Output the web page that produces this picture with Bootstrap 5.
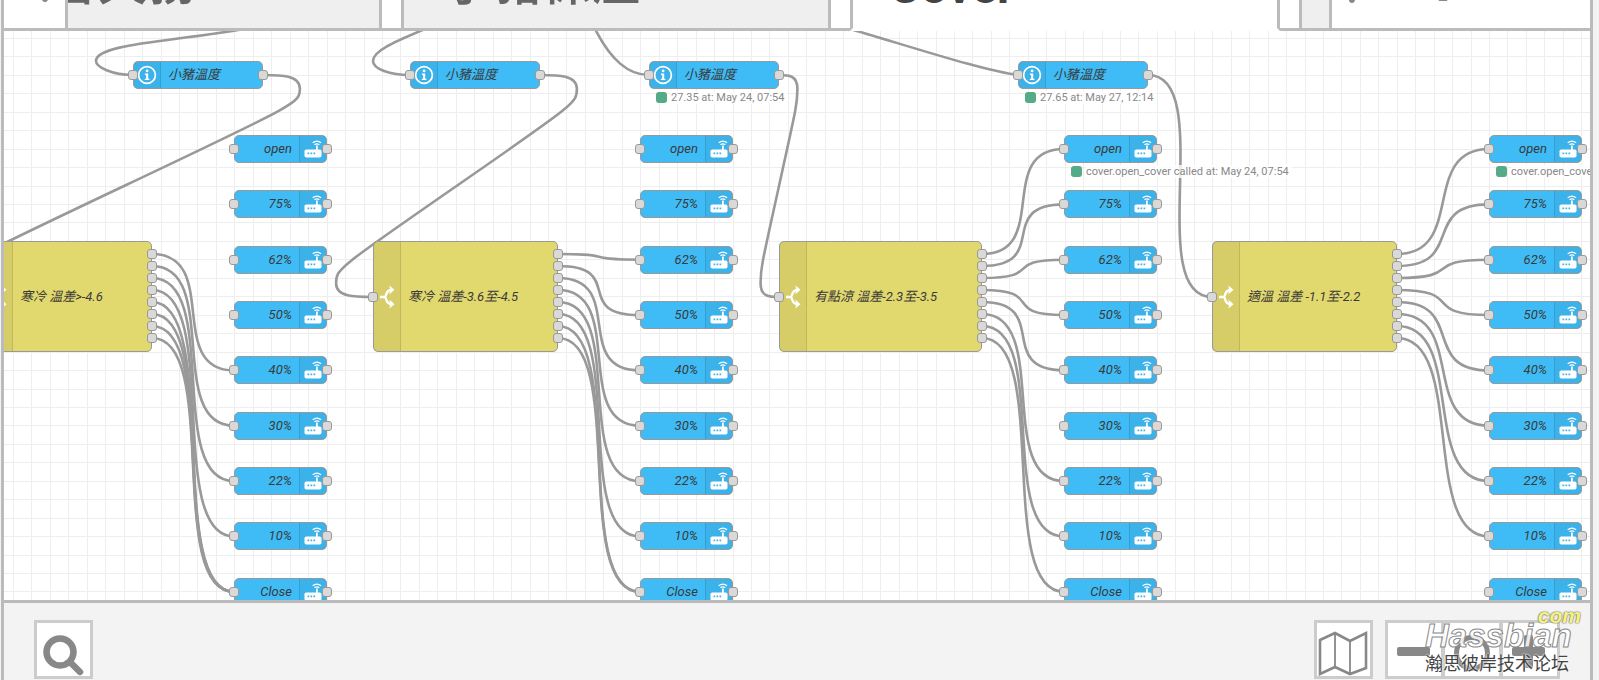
<!DOCTYPE html>
<html lang="zh-Hant">
<head>
<meta charset="utf-8">
<meta name="viewport" content="width=device-width, initial-scale=1">
<title>Cover</title>
<link href="https://cdn.jsdelivr.net/npm/bootstrap@5.3.0/dist/css/bootstrap.min.css" rel="stylesheet">
<style>
  body { font-family: Roboto, "Noto Sans CJK TC", sans-serif; background: #f3f3f3; }
  .workspace { margin: 0 6px 0 1px; border: solid #bbb; border-width: 0 3px; }

  .tabstrip { height: 31px; background: #fff; }
  .tabstrip > * { height: 71px; border-bottom: 3px solid #bbb; }
  .tab { width: 430px; padding: 0 40px; border: solid #bbb; border-width: 0 3px 3px; background: #efefef;
         color: #666; font-size: 49px; line-height: 48px; text-decoration: none; font-weight: 500; white-space: nowrap; }
  .tab-first { margin-left: -116px; padding-left: 94px; }
  .tab-current { background: #fff; color: #444; font-size: 48px; line-height: 53px; font-weight: 700; border-bottom-color: #fff; padding-left: 36px; }
  .tab-next { min-width: 0; padding: 0; border-right: 0; }
  .tab-gap { width: 19px; }
  .tabstrip .scroll-left { width: 64px; border: solid #bbb; border-width: 0 3px 3px 0; background: #fff; z-index: 2; padding: 12px 0 0 11px; }
  .tab-tools { width: 261px; border-left: 3px solid #bbb; background: #fff; z-index: 2; padding-top: 14px; }
  .tab-tools button { border: 0; background: none; }

  .flow { background: #fff; }
  .flow > svg { width: 100%; height: 100%; }
  .grid-line { stroke: #eee; stroke-width: 1; shape-rendering: crispEdges; }
  .wire { fill: none; stroke: #999; stroke-width: 2.6; }

  .node { border: 1px solid #999; border-radius: 5px; font-size: 13px; line-height: 26px; font-style: italic; color: #3a3a3a; }
  .node svg { display: block; }
  .node-info { width: 130px; height: 28px; background: #3fbcf6; }
  .node-call { width: 93px; height: 28px; background: #3fbcf6; }
  .node-switch { height: 111px; background: #e2d96e; }
  .node-icon { width: 27px; background: rgba(0,0,0,.05); border: 0 solid rgba(0,0,0,.1); }
  .node-info .node-icon, .node-switch .node-icon { border-right-width: 1px; }
  .node-call .node-icon { border-left-width: 1px; }
  .node-label { padding: 0 7px; white-space: nowrap; }
  .port { width: 10px; height: 10px; border: 1px solid #999; border-radius: 3px; background: #d9d9d9; }
  .node-status { font-size: 11px; line-height: 13px; color: #888; white-space: nowrap; }
  .node-status b { flex: none; width: 11px; height: 11px; border-radius: 3px; background: #5a8; }
  .node-status span { background: rgba(255,255,255,.8); padding-right: 3px; }

  .footer-bar { height: 80px; border-top: 3px solid #bbb; background: #f3f3f3; padding: 17px 30px 0; }
  .tool { width: 59px; height: 59px; padding: 0; border: 3px solid #ccc; background: #fff; }
  .tool + .tool-joined { margin-left: -1px; border-left-width: 2px; }
  .tool svg { display: block; margin: auto; }

  .brand-mark { right: 24px; bottom: 6px; width: 150px; pointer-events: none; }
  .brand-com { font: italic bold 21px/12px "Liberation Sans", sans-serif; color: #f7f37a; text-shadow: 0 0 1px #777, 0 0 1px #777, 0 0 2px #888; z-index: 1; margin-right: -6px; }
  .brand-name { font: italic bold 33px/28px "Liberation Sans", sans-serif; color: rgba(255,255,255,.85); -webkit-text-stroke: 1px #888; }
  .brand-sub { font: 18px/24px "Noto Sans CJK SC", sans-serif; color: #444; text-shadow: 0 0 2px #fff, 0 0 2px #fff; white-space: nowrap; }
</style>
</head>
<body class="vh-100 overflow-hidden position-relative">
<div class="workspace h-100 d-flex flex-column">
  <nav class="tabstrip d-flex align-items-end overflow-hidden flex-shrink-0">
    <button class="scroll-left flex-shrink-0 d-flex justify-content-center align-items-start" aria-label="Scroll left">
      <svg width="18" height="32" viewBox="0 0 18 32"><path d="M14 4 L4 16 L14 27" fill="none" stroke="#888" stroke-width="6" stroke-linecap="round"/></svg>
    </button>
    <a href="#" class="tab tab-first flex-shrink-0">智天務</a>
    <span class="tab-gap flex-shrink-0"></span>
    <a href="#" class="tab flex-shrink-0">小豬保溫</a>
    <span class="tab-gap flex-shrink-0"></span>
    <a href="#" class="tab tab-current flex-shrink-0">Cover</a>
    <span class="tab-gap flex-shrink-0"></span>
    <a href="#" class="tab tab-next flex-fill" aria-label="Next flow"></a>
    <div class="tab-tools flex-shrink-0 d-flex align-items-start">
      <button class="p-0 ms-2" aria-label="Scroll right"><svg width="18" height="32" viewBox="0 0 18 32"><path d="M4 4 L14 16 L12 26" fill="none" stroke="#888" stroke-width="6" stroke-linecap="round"/></svg></button>
      <button class="p-0 ms-5 ps-4" aria-label="List flows"><svg width="30" height="28" viewBox="0 0 30 28"><path d="M2 12h22L17 27h-8z" fill="#888"/></svg></button>
    </div>
  </nav>

  <main class="flow position-relative overflow-hidden flex-grow-1" id="flow">
    <svg class="position-absolute top-0 start-0" aria-hidden="true"><g id="grid"></g><g id="wires"></g></svg>
  </main>

  <footer class="footer-bar d-flex flex-shrink-0">
    <button class="tool" aria-label="Search"><svg width="53" height="53" viewBox="0 0 53 53" fill="none" stroke="#888"><circle cx="23" cy="29" r="13.5" stroke-width="6.5"/><path d="M34 40l9 9" stroke-width="6.5" stroke-linecap="round"/></svg></button>
    <button class="tool ms-auto" aria-label="Navigator"><svg width="53" height="53" viewBox="0 0 53 53" fill="none" stroke="#888" stroke-width="2.6"><path d="M3 17l15-7 15 8 16-8v35l-16 6-15-7-15 7z"/><path d="M18 10v34M33 18v32" stroke-width="1.8"/></svg></button>
    <div class="d-flex ms-2 ps-1">
      <button class="tool" aria-label="Zoom out"><svg width="53" height="53" viewBox="0 0 53 53"><rect x="9" y="24" width="33" height="9" rx="2" fill="#888"/></svg></button>
      <button class="tool tool-joined" aria-label="Reset zoom"><svg width="53" height="53" viewBox="2 0 53 53"><circle cx="28" cy="30" r="15.5" fill="none" stroke="#888" stroke-width="5"/></svg></button>
      <button class="tool tool-joined" aria-label="Zoom in"><svg width="53" height="53" viewBox="2 0 53 53"><path d="M10 26a2 2 0 0 1 2-2h10V14a2 2 0 0 1 2-2h5a2 2 0 0 1 2 2v10h10a2 2 0 0 1 2 2v5a2 2 0 0 1-2 2H31v10a2 2 0 0 1-2 2h-5a2 2 0 0 1-2-2V33H12a2 2 0 0 1-2-2z" fill="#888"/></svg></button>
    </div>
  </footer>
</div>

<div class="brand-mark position-absolute d-flex flex-column">
  <div class="brand-com align-self-end">com</div>
  <div class="brand-name">Hassbian</div>
  <div class="brand-sub">瀚思彼岸技术论坛</div>
</div>

<script src="https://cdn.jsdelivr.net/npm/bootstrap@5.3.0/dist/js/bootstrap.bundle.min.js"></script>
<script>
  const flow = document.getElementById('flow');
  const ZOOM = 0.9225;

  const ICONS = {
    info: '<svg width="26" height="26" viewBox="0 0 26 26"><circle cx="13" cy="13" r="8.4" fill="none" stroke="#fff" stroke-width="1.7"/><circle cx="13.1" cy="8.9" r="1.4" fill="#fff"/><path d="M10.9 11.6h3.3v5.2h1.2v1.3h-4.6v-1.3h1.3v-3.9h-1.2z" fill="#fff"/></svg>',
    router: '<svg width="26" height="26" viewBox="0 0 26 26"><rect x="4.5" y="13.5" width="17" height="8" rx="1.8" fill="#fff"/><path d="M16 9.500h1.8v5H16z" fill="#fff"/><path d="M7.500 16.500h1.700v1.700H7.500zM10.500 16.500h1.700v1.700h-1.700zM13.500 16.500h1.700v1.700h-1.700z" fill="#3fb4ea"/><path d="M12.700 6.800q4.200-3.400 8.400 0M14.500 8.800q2.400-2 4.800 0" fill="none" stroke="#fff" stroke-width="1.200"/></svg>',
    fork: '<svg width="26" height="26" viewBox="0 0 26 26"><path d="M6 13h4.500q1 0 1.500-2q1.200-5 6-5.200M10.500 13q1 0 1.500 2q1.200 5 6 5.200" fill="none" stroke="#fff" stroke-width="2.400"/><path d="M15.300 1.500l5.200 4.300-5.200 4.600 1-4.600zM15.300 15.600l5.200 4.600-5.200 4.300 1-4.300z" fill="#fff"/></svg>'
  };

  function add(cls, x, y, html) {
    const el = document.createElement('div');
    el.className = cls + ' position-absolute';
    el.style.left = Math.round(x) + 'px';
    el.style.top = Math.round(y) + 'px';
    el.innerHTML = html || '';
    flow.appendChild(el);
    return el;
  }
  const port = (x, y) => add('port', x - 5, y - 5);

  // Wire between an output port and an input port; loops round when the target lies behind.
  function wire(ox, oy, tx, ty) {
    const nw = 100 * ZOOM, cp = 15 * ZOOM, dx = tx - ox, dy = ty - oy, len = Math.hypot(dx, dy);
    if (dx > 0) {
      const s = len < nw ? 0.75 - 0.75 * (nw - len) / nw : 0.75;
      return `M${ox} ${oy}C${ox + nw * s} ${oy} ${tx - nw * s} ${ty} ${tx} ${ty}`;
    }
    const s = 0.4 - 0.2 * Math.max(0, (nw - Math.min(-dx, Math.abs(dy))) / nw);
    const mx = tx - dx / 2, my = ty - dy / 2, y1 = (ty + my) / 2;
    const topX = ox + nw * s, topY = Math.min(y1 - dy / 2, oy + cp);
    const botX = tx - nw * s, botY = Math.max(y1, ty - cp);
    const c = [[(ox + topX) / 2, oy], [topX, Math.max(oy, topY - cp)], [(ox + topX) / 2, Math.min(my, topY + cp)],
               [botX, Math.max(my, botY - cp)], [(tx + botX) / 2, ty]];
    if (c[2][1] === topY + cp) {
      if (Math.abs(dy) < cp * 10) {
        c[1][1] = topY - cp / 2;
        c[3][1] = botY - cp / 2;
      }
      c[2][0] = topX;
    }
    return `M${ox} ${oy}C${c[0]} ${c[1]} ${topX} ${topY}S${c[2]} ${mx} ${my}S${c[3]} ${botX} ${botY}S${c[4]} ${tx} ${ty}`;
  }

  const LEVELS = ['open', '75%', '62%', '50%', '40%', '30%', '22%', '10%', 'Close'];
  const GROUPS = [
    { info: 129, sw: -19, swW: 167, label: '寒冷 溫差&gt;-4.6', call: 230, to: [4, 5, 6, 7, 8, 8, 8, 8],
      from: 'M240 -2C165 11 92 13 92 30C92 36 108 44 129 44' },
    { info: 406, sw: 369, swW: 185, label: '寒冷 溫差-3.6至-4.5', call: 636, to: [2, 3, 4, 5, 6, 7, 8, 8],
      from: 'M421 -2C390 11 369 20 369 30C369 38 386 44 406 44' },
    { info: 645, sw: 775, swW: 203, label: '有點涼 溫差-2.3至-3.5', call: 1060, to: [0, 1, 2, 3, 4, 6, 7, 8],
      from: 'M591 -2C607 29 624 44 645 44', status: '27.35 at: May 24, 07:54', called: true },
    { info: 1014, sw: 1208, swW: 185, label: '適溫 溫差 -1.1至-2.2', call: 1485, to: [0, 1, 2, 3, 4, 5, 6, 7],
      from: 'M846 -2C905 15 980 40 1014 44', status: '27.65 at: May 27, 12:14', called: true }
  ];
  const levelY = i => 118 + i * 60 * ZOOM;
  const outY = i => 223 + i * 13 * ZOOM;
  const status = (x, y, text) => add('node-status d-flex align-items-center gap-1', x, y, `<b></b><span>${text}</span>`);

  const paths = [];
  for (const g of GROUPS) {
    paths.push(g.from, wire(g.info + 130, 44, g.sw, 266));
    g.to.forEach((t, i) => paths.push(wire(g.sw + g.swW, outY(i), g.call, levelY(t))));

    add('node node-info d-flex', g.info, 30, `<div class="node-icon">${ICONS.info}</div><div class="node-label">小豬溫度</div>`);
    port(g.info, 44); port(g.info + 130, 44);
    if (g.status) status(g.info + 7, 60, g.status);

    add('node node-switch d-flex align-items-center', g.sw, 210, `<div class="node-icon h-100 d-flex align-items-center">${ICONS.fork}</div><div class="node-label">${g.label}</div>`)
      .style.width = g.swW + 'px';
    port(g.sw, 266);
    for (let i = 0; i < 8; i++) port(g.sw + g.swW, outY(i));

    LEVELS.forEach((name, i) => {
      add('node node-call d-flex justify-content-end', g.call, levelY(i) - 14, `<div class="node-label">${name}</div><div class="node-icon">${ICONS.router}</div>`);
      port(g.call, levelY(i)); port(g.call + 93, levelY(i));
    });
    if (g.called) status(g.call + 7, 134, 'cover.open_cover called at: May 24, 07:54');
  }
  document.getElementById('wires').innerHTML = paths.map(d => `<path class="wire" d="${d}"/>`).join('');

  function drawGrid() {
    let lines = '';
    for (let x = 9; x < flow.clientWidth; x += 20 * ZOOM) lines += `<path class="grid-line" d="M${Math.round(x)}.5 0V${flow.clientHeight}"/>`;
    for (let y = 7; y < flow.clientHeight; y += 20 * ZOOM) lines += `<path class="grid-line" d="M0 ${Math.round(y)}.5H${flow.clientWidth}"/>`;
    document.getElementById('grid').innerHTML = lines;
  }
  drawGrid();
  addEventListener('resize', drawGrid);
</script>
</body>
</html>
